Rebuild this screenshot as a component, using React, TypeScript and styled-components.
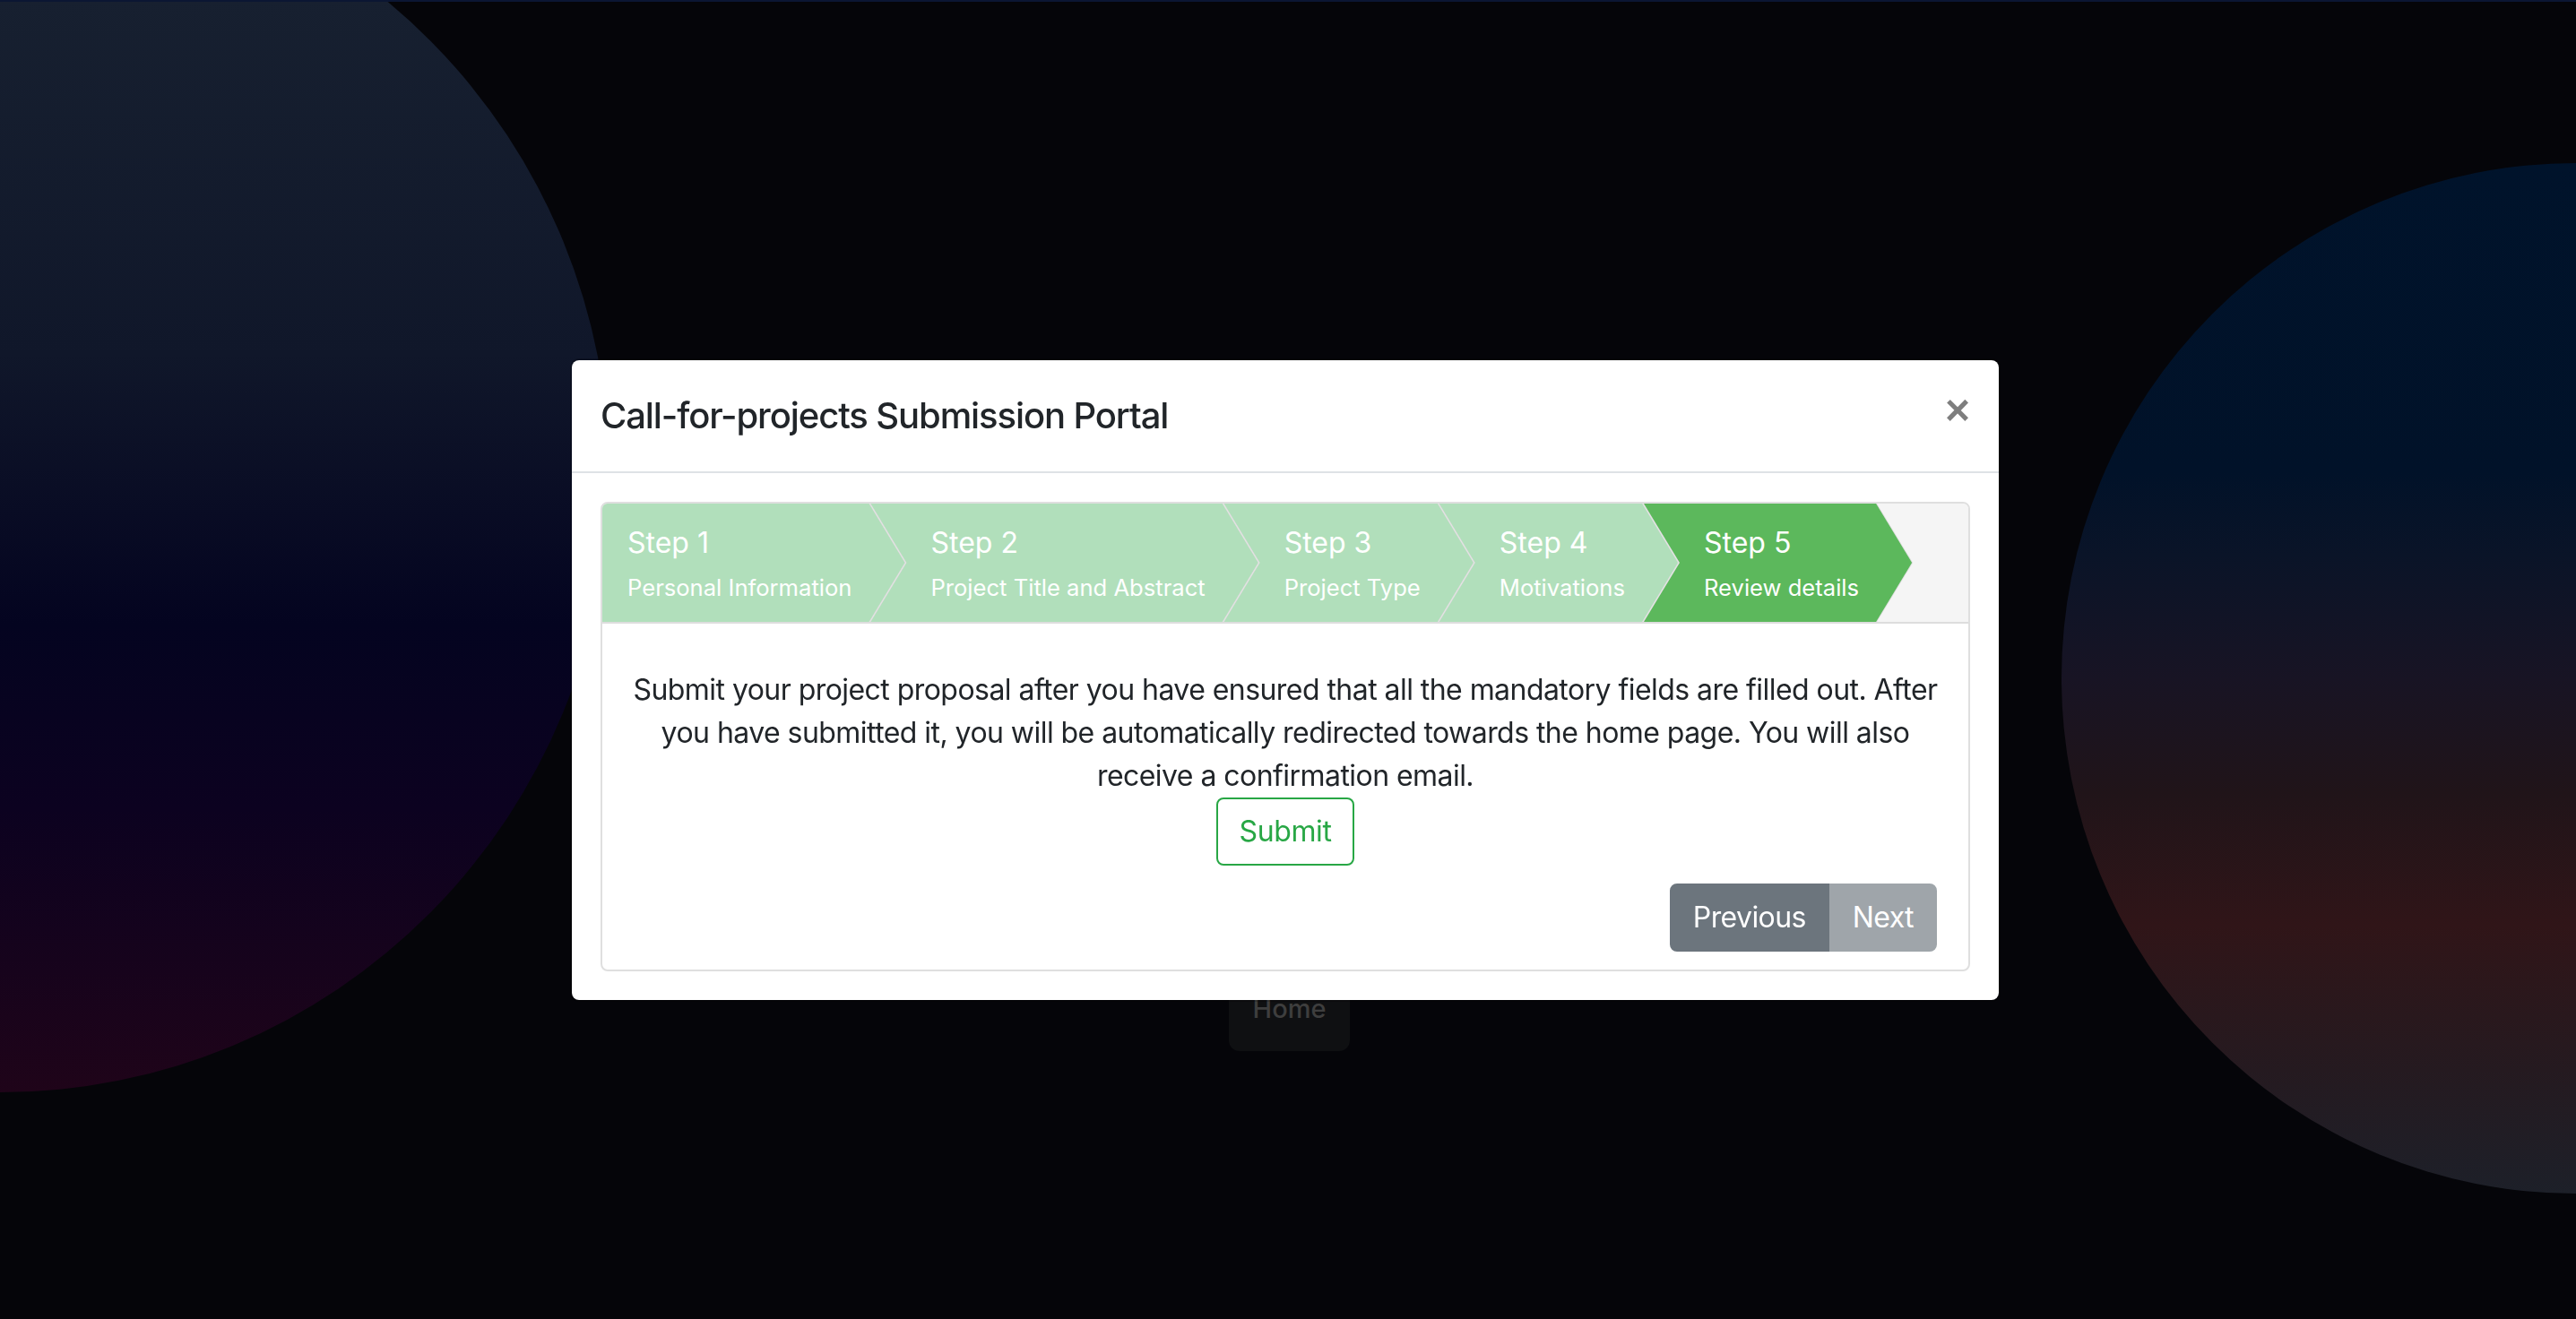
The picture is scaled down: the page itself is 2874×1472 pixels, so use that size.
import React from 'react'
import styled, { createGlobalStyle } from 'styled-components'

const GlobalStyle = createGlobalStyle`
  html, body {
    margin: 0;
    padding: 0;
    background: #050509;
    font-family: Inter, "Noto Sans", "Liberation Sans", sans-serif;
  }
  * {
    box-sizing: border-box;
  }
`

const Page = styled.div`
  position: relative;
  min-height: 1472px;
  overflow: hidden;
  border-top: 2px solid #0b1633;
  background: #050509;
`

const Blob = styled.div<{ $side: 'left' | 'right' }>`
  position: absolute;
  border-radius: 50%;
  ${(p) =>
    p.$side === 'left'
      ? `
    left: -680px;
    top: -157px;
    width: 1360px;
    height: 1374px;
    background: linear-gradient(to bottom, #1b2637 0%, #172030 11%, #10172a 40%, #040420 62%, #0c0220 77%, #1f0419 100%);
  `
      : `
    left: 2300px;
    top: 180px;
    width: 1148px;
    height: 1150px;
    background: linear-gradient(to bottom, #00132b 0%, #011229 30%, #0a1428 38%, #181424 50%, #201419 61%, #301518 74%, #251a20 88%, #1d2029 100%);
  `}
`

const Main = styled.main`
  position: relative;
  display: flex;
  flex-direction: column;
  align-items: center;
  padding-top: 1076px;
`

const HomeButton = styled.button`
  border: none;
  border-radius: 12px;
  background: #0f1012;
  color: #3e3e3e;
  font-family: Inter, "Liberation Sans", sans-serif;
  font-size: 29px;
  font-weight: 500;
  line-height: 35px;
  padding: 30px 27px;
  margin-left: 3px;
`

const Overlay = styled.div`
  position: fixed;
  inset: 0;
  display: flex;
  justify-content: center;
  align-items: flex-start;
  padding: 400px 6px 0 0;
`

const Dialog = styled.div`
  width: 1596px;
  background: #fff;
  background-clip: padding-box;
  border: 2px solid rgba(0, 0, 0, 0.2);
  border-radius: 10px;
  color: #212529;
`

const Header = styled.div`
  display: flex;
  align-items: flex-start;
  justify-content: space-between;
  padding: 32px;
  border-bottom: 2px solid #dee2e6;
`

const Title = styled.h5`
  margin: 0;
  font-size: 40px;
  font-weight: 500;
  line-height: 60px;
  letter-spacing: -1.1px;
  color: #212529;
`

const Close = styled.button`
  margin: -32px -32px -32px auto;
  padding: 32px;
  border: none;
  background: transparent;
  font-family: "Liberation Sans", Arial, sans-serif;
  font-size: 48px;
  font-weight: 700;
  line-height: 48px;
  color: #000;
  opacity: 0.5;
`

const Body = styled.div`
  padding: 32px;
`

const Card = styled.div`
  border: 2px solid #dfdfdf;
  border-radius: 8px;
  overflow: hidden;
`

const StepNav = styled.div`
  display: flex;
  background: #f5f5f5;
  border-bottom: 2px solid #dddddd;
`

const outerFirst =
  'polygon(0 0, calc(100% - 40px) 0, 100% 50%, calc(100% - 40px) 100%, 0 100%)'
const outerRest =
  'polygon(0 0, calc(100% - 40px) 0, 100% 50%, calc(100% - 40px) 100%, 0 100%, 40px 50%)'
const innerFirst =
  'polygon(0 0, calc(100% - 41px) 0, calc(100% - 1px) 50%, calc(100% - 41px) 100%, 0 100%)'
const innerRest =
  'polygon(1px 0, calc(100% - 41px) 0, calc(100% - 1px) 50%, calc(100% - 41px) 100%, 1px 100%, 41px 50%)'

const StepShape = styled.div<{ $first: boolean }>`
  flex: none;
  margin-left: ${(p) => (p.$first ? '0' : '-40px')};
  background: #dddddd;
  clip-path: ${(p) => (p.$first ? outerFirst : outerRest)};
`

const StepFill = styled.div<{ $first: boolean; $active: boolean }>`
  height: 132px;
  padding: 20px 60px 0 ${(p) => (p.$first ? '28px' : '68px')};
  background: ${(p) => (p.$active ? '#5cb85c' : '#b1dfbb')};
  clip-path: ${(p) => (p.$first ? innerFirst : innerRest)};
  color: #fff;
  white-space: nowrap;
`

const StepTitle = styled.div`
  font-size: 32px;
  line-height: 48px;
`

const StepDesc = styled.div`
  font-size: 25.6px;
  line-height: 52px;
`

const Content = styled.div`
  padding: 50px 32px 0;
  text-align: center;
`

const Message = styled.div`
  font-size: 32px;
  line-height: 48px;
  letter-spacing: -0.55px;
  color: #212529;
`

const OutlineButton = styled.button`
  font-family: inherit;
  font-size: 32px;
  line-height: 48px;
  letter-spacing: -0.4px;
  padding: 12px 24px;
  border: 2px solid #28a745;
  border-radius: 8px;
  background: transparent;
  color: #28a745;
`

const Toolbar = styled.div`
  display: flex;
  justify-content: flex-end;
  padding: 20px 35px 20px 32px;
`

const ButtonGroup = styled.div`
  display: flex;
`

const NavButton = styled.button<{ $disabled?: boolean; $pos: 'first' | 'last' }>`
  font-family: inherit;
  font-size: 32px;
  line-height: 48px;
  letter-spacing: -0.6px;
  padding: 12px 24px;
  border: 2px solid #6c757d;
  background: #6c757d;
  color: #fff;
  opacity: ${(p) => (p.$disabled ? 0.65 : 1)};
  border-radius: ${(p) => (p.$pos === 'first' ? '8px 0 0 8px' : '0 8px 8px 0')};
`

const steps = [
  { title: 'Step 1', desc: 'Personal Information' },
  { title: 'Step 2', desc: 'Project Title and Abstract' },
  { title: 'Step 3', desc: 'Project Type' },
  { title: 'Step 4', desc: 'Motivations' },
  { title: 'Step 5', desc: 'Review details' },
]

const activeStep = 4

export default function App() {
  return (
    <>
      <GlobalStyle />
      <Page>
        <Blob $side="left" />
        <Blob $side="right" />
        <Main>
          <HomeButton>Home</HomeButton>
        </Main>
        <Overlay>
          <Dialog>
            <Header>
              <Title>Call-for-projects Submission Portal</Title>
              <Close aria-label="Close">×</Close>
            </Header>
            <Body>
              <Card>
                <StepNav>
                  {steps.map((step, i) => (
                    <StepShape key={step.title} $first={i === 0}>
                      <StepFill $first={i === 0} $active={i === activeStep}>
                        <StepTitle>{step.title}</StepTitle>
                        <StepDesc>{step.desc}</StepDesc>
                      </StepFill>
                    </StepShape>
                  ))}
                </StepNav>
                <Content>
                  <Message>
                    Submit your project proposal after you have ensured that all the
                    mandatory fields are filled out. After you have submitted it, you will
                    be automatically redirected towards the home page. You will also
                    receive a confirmation email.
                  </Message>
                  <OutlineButton>Submit</OutlineButton>
                </Content>
                <Toolbar>
                  <ButtonGroup>
                    <NavButton $pos="first">Previous</NavButton>
                    <NavButton $pos="last" $disabled>
                      Next
                    </NavButton>
                  </ButtonGroup>
                </Toolbar>
              </Card>
            </Body>
          </Dialog>
        </Overlay>
      </Page>
    </>
  )
}
